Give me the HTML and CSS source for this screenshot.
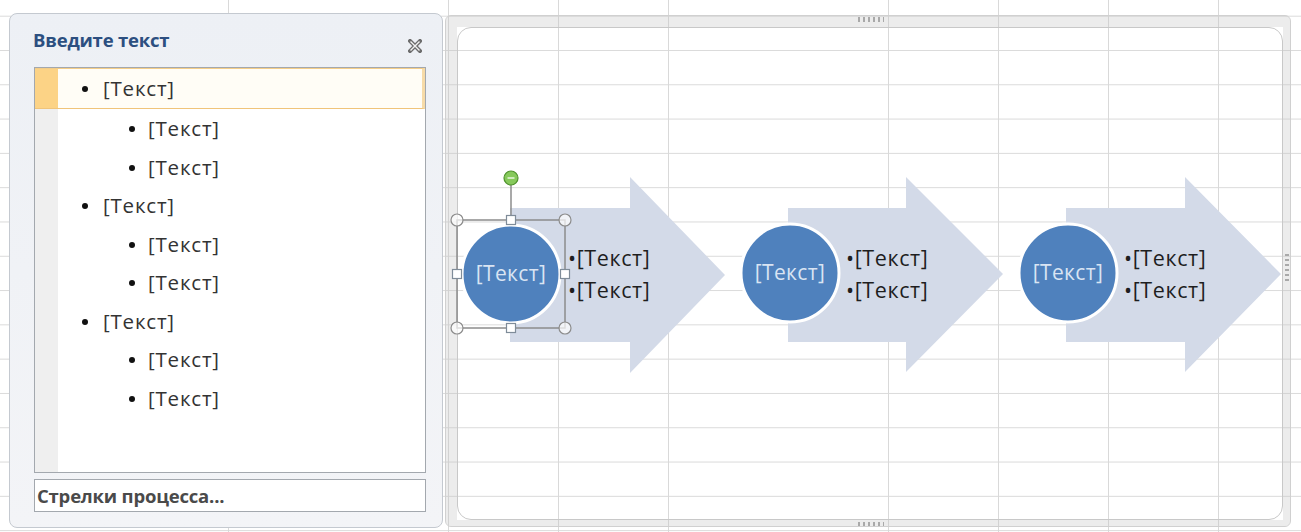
FILE: index.html
```html
<!DOCTYPE html>
<html>
<head>
  <title>Стрелки процесса</title>
  <link rel="stylesheet" href="styles.css">
</head>
<body>
  <div class="screen">
    <section class="panel">
      <div class="panel-head">
        <span class="panel-title">Введите текст</span>
        <svg class="close" width="14" height="14" viewBox="0 0 14 14">
          <path d="M2 2L12 12M12 2L2 12" stroke="#6d6d6d" stroke-width="4" stroke-linecap="square"/>
          <path d="M2.5 2.5L11.5 11.5M11.5 2.5L2.5 11.5" stroke="#f2f2f2" stroke-width="1.4"/>
        </svg>
      </div>

      <ul class="outline">
        <li class="lvl1 current">[Текст]</li>
        <li class="lvl2">[Текст]</li>
        <li class="lvl2">[Текст]</li>
        <li class="lvl1">[Текст]</li>
        <li class="lvl2">[Текст]</li>
        <li class="lvl2">[Текст]</li>
        <li class="lvl1">[Текст]</li>
        <li class="lvl2">[Текст]</li>
        <li class="lvl2">[Текст]</li>
      </ul>

      <div class="layout-name">Стрелки процесса...</div>
    </section>

    <section class="frame">
      <div class="frame-band">
        <div class="canvas">
          <svg class="diagram" viewBox="458 28 824 491">
            <!-- arrows -->
            <g fill="#d3dae8">
              <polygon points="510,208 630,208 630,177 725,275 630,373 630,342 510,342"/>
              <polygon points="788,208 906,208 906,177 1003,274 906,372 906,342 788,342"/>
              <polygon points="1066,208 1185,208 1185,177 1281,274 1185,372 1185,342 1066,342"/>
            </g>

            <!-- circles -->
            <g fill="#4f81bd" stroke="#ffffff" stroke-width="3">
              <circle cx="511" cy="274" r="49"/>
              <circle cx="790" cy="273" r="49"/>
              <circle cx="1068" cy="273" r="49"/>
            </g>
            <g class="node-label" text-anchor="middle">
              <text x="511" y="281">[Текст]</text>
              <text x="790" y="280">[Текст]</text>
              <text x="1068" y="280">[Текст]</text>
            </g>

            <g class="item">
              <text x="568" y="266">•[Текст]</text>
              <text x="568" y="298">•[Текст]</text>
              <text x="846" y="266">•[Текст]</text>
              <text x="846" y="298">•[Текст]</text>
              <text x="1124" y="266">•[Текст]</text>
              <text x="1124" y="298">•[Текст]</text>
            </g>

            <!-- selection of the first shape -->
            <g fill="none" stroke="#8c8c8c" stroke-width="1.5">
              <rect x="457" y="220" width="108" height="108"/>
              <line x1="511" y1="185" x2="511" y2="220"/>
            </g>
            <g fill="rgba(255,255,255,0.7)" stroke="#8c8c8c" stroke-width="1.2">
              <circle cx="457" cy="220" r="6"/>
              <circle cx="565" cy="220" r="6"/>
              <circle cx="457" cy="328" r="6"/>
              <circle cx="565" cy="328" r="6"/>
            </g>
            <g fill="#ffffff" stroke="#7f8c99" stroke-width="1.2">
              <rect x="506.5" y="215.5" width="9" height="9"/>
              <rect x="506.5" y="323.5" width="9" height="9"/>
              <rect x="560.5" y="269.5" width="9" height="9"/>
              <rect x="452.5" y="269.5" width="9" height="9"/>
            </g>
            <circle cx="511" cy="178" r="7" fill="#86c95b" stroke="#4f912d" stroke-width="1.2"/>
            <line x1="507.5" y1="178" x2="514.5" y2="178" stroke="#e9f6df" stroke-width="1.5"/>
          </svg>
        </div>
      </div>
      <span class="grip grip-top"></span>
      <span class="grip grip-bottom"></span>
      <span class="grip grip-right"></span>
    </section>
  </div>
</body>
</html>
```

FILE: styles.css
```css
body {
  margin: 0;
  height: 532px;
  overflow: hidden;
  font-family: "Open Sans", "Noto Sans", sans-serif;
  background-color: #fff;
  background-image:
    linear-gradient(to right, #d9d9d9 1px, transparent 1px),
    linear-gradient(to bottom, #dadada 1px, transparent 1px);
  background-size: 110px 34.3px;
  background-position: 8px 15.7px;
}

.screen {
  display: flex;
  align-items: flex-start;
  gap: 2px;
  padding: 13px 0 0 9px;
}

/* text pane */

.panel {
  box-sizing: border-box;
  width: 434px;
  height: 515px;
  display: flex;
  flex-direction: column;
  padding: 0 16px 15px 24px;
  border: 1px solid #c4c9d0;
  border-radius: 8px;
  background: linear-gradient(#edf0f5, #f3f4f7);
}

.panel-head {
  height: 53px;
  display: flex;
  align-items: flex-start;
  justify-content: space-between;
}

.panel-title {
  margin: 13px 0 0 -1px;
  font-size: 18.5px;
  font-weight: bold;
  color: #2c4f80;
  letter-spacing: -0.2px;
}

.close {
  margin: 25px 4px 0 0;
}

.outline {
  flex: 1;
  margin: 0;
  padding: 0;
  list-style: none;
  border: 1px solid #a3a8ae;
  background: linear-gradient(to right, #efefef 23px, #ffffff 23px);
}

.outline li {
  position: relative;
  height: 38.5px;
  line-height: 38.5px;
  font-size: 20.5px;
  letter-spacing: 0.8px;
  color: #333;
}

.outline li::before {
  content: "";
  position: absolute;
  top: 17px;
  width: 6px;
  height: 6px;
  border-radius: 50%;
  background: #111;
}

.outline .lvl1 {
  padding-left: 68px;
}

.outline .lvl1::before {
  left: 47px;
}

.outline .lvl2 {
  padding-left: 113px;
}

.outline .lvl2::before {
  left: 94px;
}

.outline .current {
  height: 39px;
  line-height: 39px;
  border-top: 1px solid #f4cd88;
  border-bottom: 1px solid #f0c47a;
  border-right: 3px solid #f7dba8;
  background: linear-gradient(to right, #fcd386 23px, #fffdf6 23px);
}

.layout-name {
  margin-top: 6px;
  height: 31px;
  line-height: 31px;
  padding-left: 2px;
  border: 1px solid #a3a8ae;
  background: #fff;
  font-size: 18.5px;
  font-weight: bold;
  color: #4a4a4a;
  letter-spacing: -0.2px;
}

/* drawing area */

.frame {
  position: relative;
  box-sizing: border-box;
  width: 846px;
  height: 512px;
  margin-top: 2px;
  border: 1px solid #d0d0d0;
  border-radius: 6px;
}

.frame-band {
  box-sizing: border-box;
  height: 100%;
  border-style: solid;
  border-color: rgba(195, 195, 195, 0.32);
  border-width: 11px 7px 6px 11px;
  border-radius: 5px;
}

.canvas {
  box-sizing: border-box;
  height: 100%;
  border: 1px solid #c8c8c8;
  border-radius: 14px;
}

.diagram {
  display: block;
  width: 824px;
  height: 491px;
  overflow: visible;
}

.node-label {
  font-family: "Open Sans", sans-serif;
  font-size: 21px;
  letter-spacing: 0.4px;
  fill: #d9e4f3;
}

.item {
  font-family: "Open Sans", sans-serif;
  font-size: 21.5px;
  letter-spacing: 0.6px;
  fill: #1e1e1e;
}

.grip {
  position: absolute;
  background: repeating-linear-gradient(to right, #a9a9a9 0 2px, transparent 2px 5px);
}

.grip-top {
  left: 412px;
  top: 1px;
  width: 26px;
  height: 5px;
}

.grip-bottom {
  left: 412px;
  bottom: 0;
  width: 26px;
  height: 4px;
}

.grip-right {
  right: 1px;
  top: 238px;
  width: 4px;
  height: 30px;
  background: repeating-linear-gradient(to bottom, #a9a9a9 0 2px, transparent 2px 5px);
}
```
